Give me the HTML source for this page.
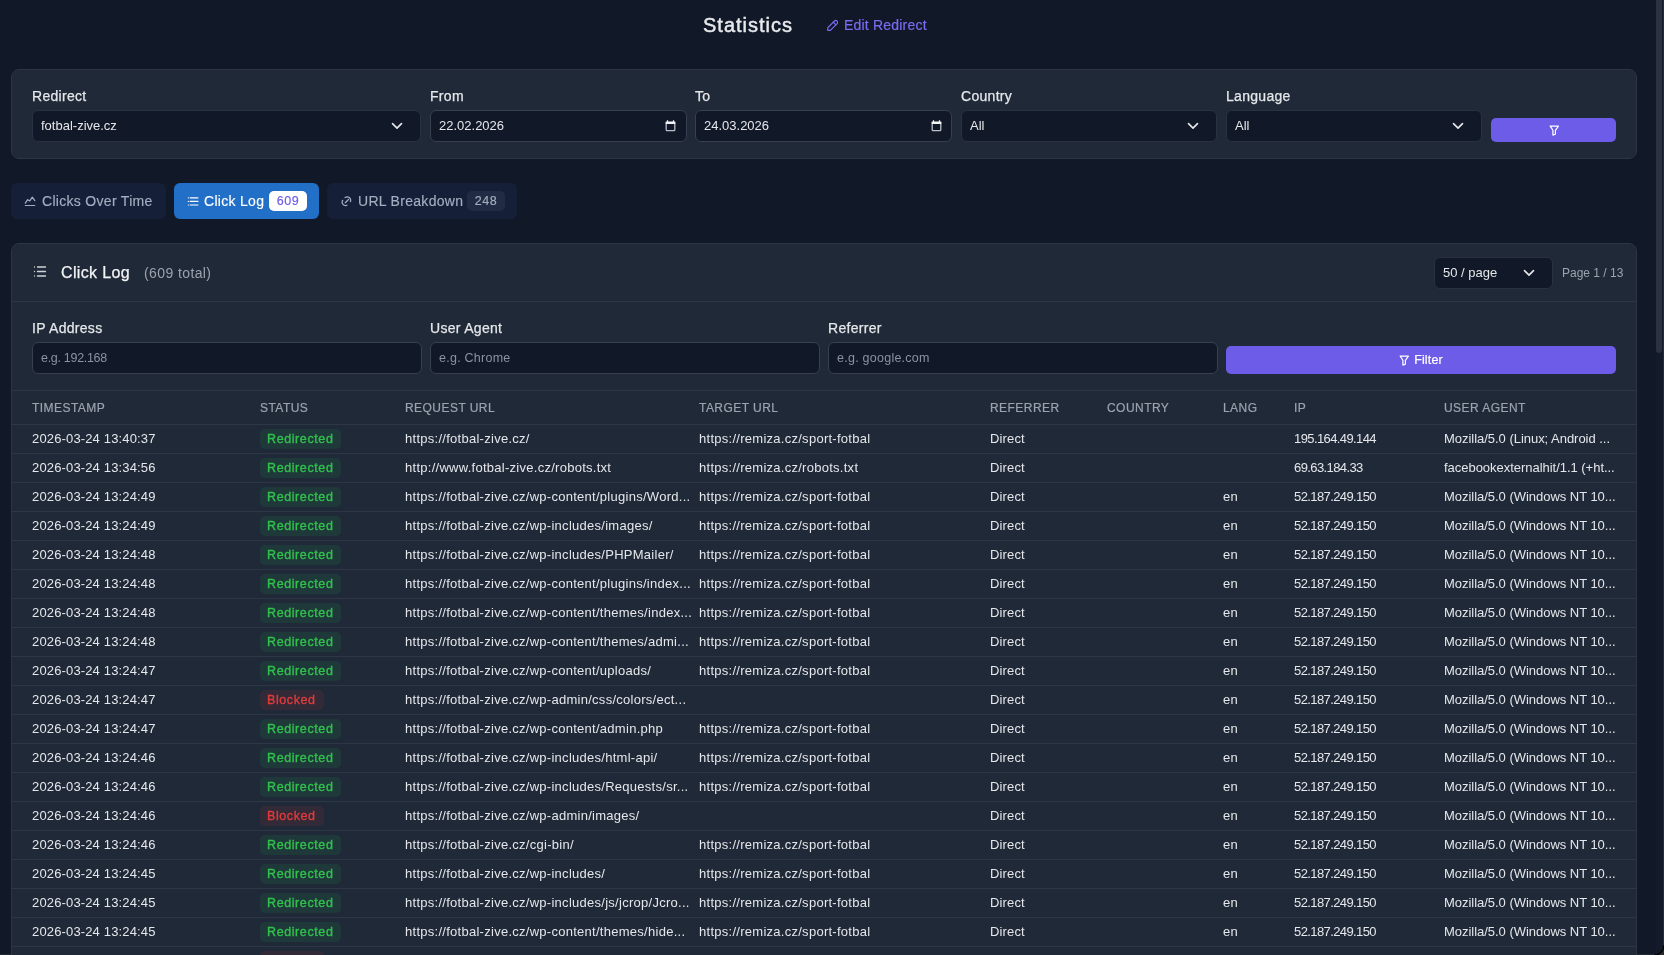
<!DOCTYPE html>
<html><head><meta charset="utf-8">
<style>
*{box-sizing:border-box;margin:0;padding:0}
html,body{width:1664px;height:955px;overflow:hidden;background:#111827;font-family:"Liberation Sans",sans-serif;color:#e5e7eb}
#wrap{position:absolute;left:0;top:0;width:1664px;height:955px;will-change:transform}
.abs{position:absolute}
.sb{position:absolute;left:1656px;top:0;width:8px;height:955px;background:#131a29}
.sb .th{position:absolute;left:0;top:0;width:6px;height:353px;background:#2b3140;border-radius:0 0 3px 3px}
.sb .ln{position:absolute;left:7px;top:0;width:1px;height:955px;background:#262d3a}
.title{position:absolute;left:703px;top:12px;font-size:20px;font-weight:400;letter-spacing:1px;-webkit-text-stroke:.45px #e9eaee;line-height:26px;color:#e9eaee;white-space:nowrap}
.edit{position:absolute;left:826px;top:16px;font-size:14px;line-height:18px;letter-spacing:.2px;-webkit-text-stroke:.2px #7b6cf2;color:#7b6cf2;white-space:nowrap;display:flex;align-items:center}
.edit svg{margin-right:6px}
.panel{position:absolute;left:11px;width:1626px;background:#1f2937;border:1px solid #2c3544;border-radius:8px}
.lbl{position:absolute;font-size:14px;line-height:16px;color:#e5e7eb;letter-spacing:.3px;white-space:nowrap;-webkit-text-stroke:.25px #e5e7eb}
.inp{position:absolute;height:32px;background:#111827;border:1px solid #364050;border-radius:6px;font-size:13px;line-height:30px;padding-left:8px;color:#e5e7eb;white-space:nowrap}
.inp.sel{border-color:#293242}
.inp svg{position:absolute}
.btn{position:absolute;background:#6c5ce7;border-radius:5px;display:flex;align-items:center;justify-content:center;color:#fff;font-size:13px}
.tab{position:absolute;top:183px;height:36px;border-radius:6px;background:#152038;color:#a3aec0;font-size:14px;letter-spacing:.3px;white-space:nowrap;-webkit-text-stroke:.15px currentColor}
.tab.on{background:#226fc8;color:#fff}
.tab svg{position:absolute}
.tab .t{position:absolute;top:10px;line-height:16px}
.badge{position:absolute;top:8px;height:20px;border-radius:5px;font-size:12.5px;line-height:20px;text-align:center}
.ph{color:#8a93a3;font-size:12.5px;letter-spacing:.25px}
table{position:absolute;left:12px;top:391px;width:1624px;border-collapse:collapse;table-layout:fixed}
th{height:33px;text-align:left;font-size:12px;font-weight:400;color:#9ca3af;letter-spacing:.45px;-webkit-text-stroke:.2px #9ca3af;padding:2px 0 0 20px;border-bottom:1px solid #2d3644;white-space:nowrap;vertical-align:middle}
td{height:29px;font-size:13px;color:#e5e7eb;padding:0 0 0 20px;border-bottom:1px solid #2d3644;white-space:nowrap;overflow:visible;vertical-align:middle;letter-spacing:.15px}
td:nth-child(3),td:nth-child(4){letter-spacing:.27px}
td:nth-child(8){letter-spacing:-.6px}
td:nth-child(9){letter-spacing:-.03px}
.g{display:inline-block;height:20px;line-height:20px;padding:0 8px 0 7px;border-radius:5px;background:#1f393b;color:#31c24c;font-size:12.5px;font-weight:400;letter-spacing:.6px;-webkit-text-stroke:.35px #31c24c}
.r{display:inline-block;height:20px;line-height:20px;padding:0 8px 0 7px;border-radius:5px;background:#332a37;color:#e23b3b;font-size:12.5px;font-weight:400;letter-spacing:.6px;-webkit-text-stroke:.35px #e23b3b}
</style></head>
<body>
<div id="wrap">
<div class="sb"><div class="th"></div><div class="ln"></div></div>
<div class="abs" style="left:0;top:954px;width:1664px;height:1px;background:rgba(255,255,255,.08)"></div>
<svg class="abs" style="left:1654px;top:945px" width="10" height="10" viewBox="0 0 10 10"><path d="M10 0V10H0A10 10 0 0 0 10 0Z" fill="#26282c"/><path d="M0 10A10 10 0 0 0 10 0" fill="none" stroke="#000" stroke-width="1.2"/></svg>

<div class="title">Statistics</div>
<div class="edit"><svg width="12" height="12" viewBox="0 0 12 12" fill="none" stroke="#7b6cf2" stroke-width="1.2" stroke-linejoin="round" stroke-linecap="round"><path d="M1.8 11.3V8.7L8.5 2A1.84 1.84 0 0 1 11.1 4.6L4.4 11.3Z"/><path d="M7.3 3.2 9.9 5.8"/></svg>Edit Redirect</div>

<!-- top filter panel -->
<div class="panel" style="top:69px;height:90px">
</div>
<div class="lbl" style="left:32px;top:88px">Redirect</div>
<div class="inp sel" style="left:32px;top:110px;width:389px">fotbal-zive.cz<svg style="left:358px;top:11px" width="12" height="8" viewBox="0 0 12 8" fill="none" stroke="#e5e7eb" stroke-width="1.6" stroke-linecap="round" stroke-linejoin="round"><path d="M1.5 1.6 6 6.1 10.5 1.6"/></svg></div>
<div class="lbl" style="left:430px;top:88px">From</div>
<div class="inp" style="left:430px;top:110px;width:257px">22.02.2026<svg style="left:233.5px;top:9px" width="11" height="12" viewBox="0 0 11 12"><path d="M1.5 1.5h8a1 1 0 0 1 1 1V4H.5V2.5a1 1 0 0 1 1-1z" fill="#f3f4f6"/><path d="M2.5 .3v2M8.5 .3v2" stroke="#f3f4f6" stroke-width="1.2"/><path d="M1.2 4v5.8a.9.9 0 0 0 .9.9h6.8a.9.9 0 0 0 .9-.9V4" fill="none" stroke="#b8bec8" stroke-width="1.3"/></svg></div>
<div class="lbl" style="left:695px;top:88px">To</div>
<div class="inp" style="left:695px;top:110px;width:257px">24.03.2026<svg style="left:234.5px;top:9px" width="11" height="12" viewBox="0 0 11 12"><path d="M1.5 1.5h8a1 1 0 0 1 1 1V4H.5V2.5a1 1 0 0 1 1-1z" fill="#f3f4f6"/><path d="M2.5 .3v2M8.5 .3v2" stroke="#f3f4f6" stroke-width="1.2"/><path d="M1.2 4v5.8a.9.9 0 0 0 .9.9h6.8a.9.9 0 0 0 .9-.9V4" fill="none" stroke="#b8bec8" stroke-width="1.3"/></svg></div>
<div class="lbl" style="left:961px;top:88px">Country</div>
<div class="inp sel" style="left:961px;top:110px;width:256px">All<svg style="left:225px;top:11px" width="12" height="8" viewBox="0 0 12 8" fill="none" stroke="#e5e7eb" stroke-width="1.6" stroke-linecap="round" stroke-linejoin="round"><path d="M1.5 1.6 6 6.1 10.5 1.6"/></svg></div>
<div class="lbl" style="left:1226px;top:88px">Language</div>
<div class="inp sel" style="left:1226px;top:110px;width:256px">All<svg style="left:225px;top:11px" width="12" height="8" viewBox="0 0 12 8" fill="none" stroke="#e5e7eb" stroke-width="1.6" stroke-linecap="round" stroke-linejoin="round"><path d="M1.5 1.6 6 6.1 10.5 1.6"/></svg></div>
<div class="btn" style="left:1491px;top:118px;width:125px;height:24px"><svg width="10" height="11" viewBox="0 0 10 11" fill="none" stroke="#fff" stroke-width="1.2" stroke-linejoin="round" stroke-linecap="round"><path d="M1.2 1.1h8.2L6.4 5.3v3.9L3.9 10.1V5.3Z"/></svg></div>

<!-- tabs -->
<div class="tab" style="left:11px;width:155px"><svg style="left:13px;top:13px" width="12" height="11" viewBox="0 0 12 11" fill="none" stroke="#a3aec0" stroke-width="1.2" stroke-linecap="round" stroke-linejoin="round"><path d="M1.3 7.2 3.6 3.7 5.8 4.9 8.3 1.2 10.8 4.7M1.3 9.5h9.5"/></svg><span class="t" style="left:31px">Clicks Over Time</span></div>
<div class="tab on" style="left:174px;width:145px"><svg style="left:13px;top:13px" width="12" height="11" viewBox="0 0 12 11" fill="none" stroke="#fff" stroke-width="1.2" stroke-linecap="round"><path d="M1.4 1.8h.1M1.4 5.4h.1M1.4 9h.1M3.2 1.8h7.7M3.2 5.4h7.7M3.2 9h7.7"/></svg><span class="t" style="left:30px">Click Log</span><span class="badge" style="left:95px;width:38px;background:#fff;color:#6c5ce7;letter-spacing:.5px">609</span></div>
<div class="tab" style="left:327px;width:190px"><svg style="left:14px;top:12px" width="12" height="12" viewBox="0 0 12 12" fill="none" stroke="#a3aec0" stroke-width="1.25" stroke-linecap="round"><path d="M4.1 2.5A3.5 3.5 0 0 1 9.4 6.6M1.7 5.3A3.4 3.4 0 0 0 6 10.2M4.3 7.7 7.5 4.5"/></svg><span class="t" style="left:31px">URL Breakdown</span><span class="badge" style="left:140px;width:38px;background:#212c44;color:#a3aec0;letter-spacing:.5px">248</span></div>

<!-- click log panel -->
<div class="panel" style="top:243px;height:760px"></div>
<div class="abs" style="left:12px;top:301px;width:1624px;height:1px;background:#2d3644"></div>
<div class="abs" style="left:12px;top:390px;width:1624px;height:1px;background:#2d3644"></div>
<svg class="abs" style="left:33px;top:265px" width="14" height="13" viewBox="0 0 14 13" fill="none" stroke="#d1d5db" stroke-width="1.3" stroke-linecap="round"><path d="M1.5 2h.01M1.5 6.5h.01M1.5 11h.01M4.5 2h8M4.5 6.5h8M4.5 11h8"/></svg>
<div class="abs" style="left:61px;top:264px;font-size:16px;line-height:18px;letter-spacing:.35px;color:#f3f4f6;white-space:nowrap;-webkit-text-stroke:.25px #f3f4f6">Click Log</div>
<div class="abs" style="left:144px;top:265px;font-size:14px;line-height:16px;letter-spacing:.4px;color:#9ca3af;white-space:nowrap">(609 total)</div>
<div class="inp sel" style="left:1434px;top:257px;width:119px;height:32px;line-height:30px">50 / page<svg style="left:88px;top:11px" width="12" height="8" viewBox="0 0 12 8" fill="none" stroke="#e5e7eb" stroke-width="1.6" stroke-linecap="round" stroke-linejoin="round"><path d="M1.5 1.6 6 6.1 10.5 1.6"/></svg></div>
<div class="abs" style="left:1562px;top:266px;font-size:12px;line-height:14px;color:#9ca3af;white-space:nowrap">Page 1 / 13</div>

<div class="lbl" style="left:32px;top:320px">IP Address</div>
<div class="inp ph" style="left:32px;top:342px;width:390px;letter-spacing:-.3px">e.g. 192.168</div>
<div class="lbl" style="left:430px;top:320px">User Agent</div>
<div class="inp ph" style="left:430px;top:342px;width:390px">e.g. Chrome</div>
<div class="lbl" style="left:828px;top:320px">Referrer</div>
<div class="inp ph" style="left:828px;top:342px;width:390px">e.g. google.com</div>
<div class="btn" style="left:1226px;top:346px;width:390px;height:28px"><svg style="margin-right:5px" width="10" height="11" viewBox="0 0 10 11" fill="none" stroke="#fff" stroke-width="1.2" stroke-linejoin="round" stroke-linecap="round"><path d="M1.2 1.1h8.2L6.4 5.3v3.9L3.9 10.1V5.3Z"/></svg><span style="font-size:12.5px;letter-spacing:.15px;-webkit-text-stroke:.2px #fff">Filter</span></div>

<table>
<colgroup><col style="width:228px"><col style="width:145px"><col style="width:294px"><col style="width:291px"><col style="width:117px"><col style="width:116px"><col style="width:71px"><col style="width:150px"><col></colgroup>
<thead><tr><th>TIMESTAMP</th><th>STATUS</th><th>REQUEST URL</th><th>TARGET URL</th><th>REFERRER</th><th>COUNTRY</th><th>LANG</th><th>IP</th><th>USER AGENT</th></tr></thead>
<tbody>
<!--ROWS-->
<tr><td>2026-03-24 13:40:37</td><td><span class="g">Redirected</span></td><td>https://fotbal-zive.cz/</td><td>https://remiza.cz/sport-fotbal</td><td>Direct</td><td></td><td></td><td>195.164.49.144</td><td>Mozilla/5.0 (Linux; Android ...</td></tr>
<tr><td>2026-03-24 13:34:56</td><td><span class="g">Redirected</span></td><td>http://www.fotbal-zive.cz/robots.txt</td><td>https://remiza.cz/robots.txt</td><td>Direct</td><td></td><td></td><td>69.63.184.33</td><td>facebookexternalhit/1.1 (+ht...</td></tr>
<tr><td>2026-03-24 13:24:49</td><td><span class="g">Redirected</span></td><td>https://fotbal-zive.cz/wp-content/plugins/Word...</td><td>https://remiza.cz/sport-fotbal</td><td>Direct</td><td></td><td>en</td><td>52.187.249.150</td><td>Mozilla/5.0 (Windows NT 10...</td></tr>
<tr><td>2026-03-24 13:24:49</td><td><span class="g">Redirected</span></td><td>https://fotbal-zive.cz/wp-includes/images/</td><td>https://remiza.cz/sport-fotbal</td><td>Direct</td><td></td><td>en</td><td>52.187.249.150</td><td>Mozilla/5.0 (Windows NT 10...</td></tr>
<tr><td>2026-03-24 13:24:48</td><td><span class="g">Redirected</span></td><td>https://fotbal-zive.cz/wp-includes/PHPMailer/</td><td>https://remiza.cz/sport-fotbal</td><td>Direct</td><td></td><td>en</td><td>52.187.249.150</td><td>Mozilla/5.0 (Windows NT 10...</td></tr>
<tr><td>2026-03-24 13:24:48</td><td><span class="g">Redirected</span></td><td>https://fotbal-zive.cz/wp-content/plugins/index...</td><td>https://remiza.cz/sport-fotbal</td><td>Direct</td><td></td><td>en</td><td>52.187.249.150</td><td>Mozilla/5.0 (Windows NT 10...</td></tr>
<tr><td>2026-03-24 13:24:48</td><td><span class="g">Redirected</span></td><td>https://fotbal-zive.cz/wp-content/themes/index...</td><td>https://remiza.cz/sport-fotbal</td><td>Direct</td><td></td><td>en</td><td>52.187.249.150</td><td>Mozilla/5.0 (Windows NT 10...</td></tr>
<tr><td>2026-03-24 13:24:48</td><td><span class="g">Redirected</span></td><td>https://fotbal-zive.cz/wp-content/themes/admi...</td><td>https://remiza.cz/sport-fotbal</td><td>Direct</td><td></td><td>en</td><td>52.187.249.150</td><td>Mozilla/5.0 (Windows NT 10...</td></tr>
<tr><td>2026-03-24 13:24:47</td><td><span class="g">Redirected</span></td><td>https://fotbal-zive.cz/wp-content/uploads/</td><td>https://remiza.cz/sport-fotbal</td><td>Direct</td><td></td><td>en</td><td>52.187.249.150</td><td>Mozilla/5.0 (Windows NT 10...</td></tr>
<tr><td>2026-03-24 13:24:47</td><td><span class="r">Blocked</span></td><td>https://fotbal-zive.cz/wp-admin/css/colors/ect...</td><td></td><td>Direct</td><td></td><td>en</td><td>52.187.249.150</td><td>Mozilla/5.0 (Windows NT 10...</td></tr>
<tr><td>2026-03-24 13:24:47</td><td><span class="g">Redirected</span></td><td>https://fotbal-zive.cz/wp-content/admin.php</td><td>https://remiza.cz/sport-fotbal</td><td>Direct</td><td></td><td>en</td><td>52.187.249.150</td><td>Mozilla/5.0 (Windows NT 10...</td></tr>
<tr><td>2026-03-24 13:24:46</td><td><span class="g">Redirected</span></td><td>https://fotbal-zive.cz/wp-includes/html-api/</td><td>https://remiza.cz/sport-fotbal</td><td>Direct</td><td></td><td>en</td><td>52.187.249.150</td><td>Mozilla/5.0 (Windows NT 10...</td></tr>
<tr><td>2026-03-24 13:24:46</td><td><span class="g">Redirected</span></td><td>https://fotbal-zive.cz/wp-includes/Requests/sr...</td><td>https://remiza.cz/sport-fotbal</td><td>Direct</td><td></td><td>en</td><td>52.187.249.150</td><td>Mozilla/5.0 (Windows NT 10...</td></tr>
<tr><td>2026-03-24 13:24:46</td><td><span class="r">Blocked</span></td><td>https://fotbal-zive.cz/wp-admin/images/</td><td></td><td>Direct</td><td></td><td>en</td><td>52.187.249.150</td><td>Mozilla/5.0 (Windows NT 10...</td></tr>
<tr><td>2026-03-24 13:24:46</td><td><span class="g">Redirected</span></td><td>https://fotbal-zive.cz/cgi-bin/</td><td>https://remiza.cz/sport-fotbal</td><td>Direct</td><td></td><td>en</td><td>52.187.249.150</td><td>Mozilla/5.0 (Windows NT 10...</td></tr>
<tr><td>2026-03-24 13:24:45</td><td><span class="g">Redirected</span></td><td>https://fotbal-zive.cz/wp-includes/</td><td>https://remiza.cz/sport-fotbal</td><td>Direct</td><td></td><td>en</td><td>52.187.249.150</td><td>Mozilla/5.0 (Windows NT 10...</td></tr>
<tr><td>2026-03-24 13:24:45</td><td><span class="g">Redirected</span></td><td>https://fotbal-zive.cz/wp-includes/js/jcrop/Jcro...</td><td>https://remiza.cz/sport-fotbal</td><td>Direct</td><td></td><td>en</td><td>52.187.249.150</td><td>Mozilla/5.0 (Windows NT 10...</td></tr>
<tr><td>2026-03-24 13:24:45</td><td><span class="g">Redirected</span></td><td>https://fotbal-zive.cz/wp-content/themes/hide...</td><td>https://remiza.cz/sport-fotbal</td><td>Direct</td><td></td><td>en</td><td>52.187.249.150</td><td>Mozilla/5.0 (Windows NT 10...</td></tr>
<tr><td>2026-03-24 13:24:45</td><td><span class="r">Blocked</span></td><td>https://fotbal-zive.cz/wp-admin/js/</td><td></td><td>Direct</td><td></td><td>en</td><td>52.187.249.150</td><td>Mozilla/5.0 (Windows NT 10...</td></tr>
<!--/ROWS-->
</tbody></table>

</div>
</body></html>
